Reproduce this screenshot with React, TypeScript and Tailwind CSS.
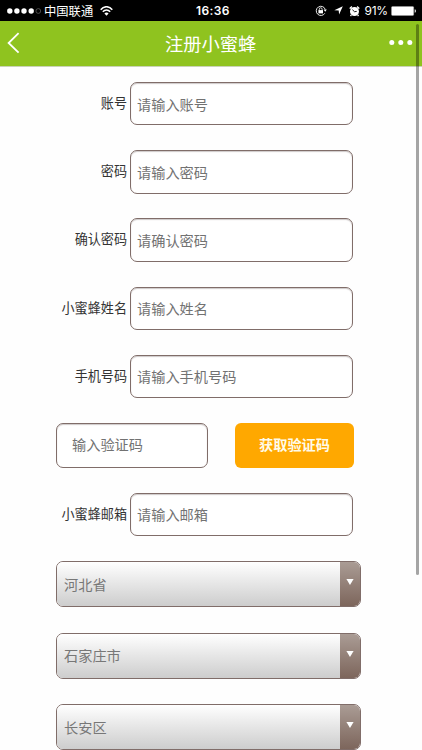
import React from 'react';

type FieldProps = { label: string; placeholder: string };

const inputStyle =
  'rounded-[7px] border border-[#806d69] bg-white text-[14.2px] text-[#727272] placeholder:text-[#727272] placeholder:opacity-100 shadow-[inset_0_1px_1px_rgba(80,60,60,0.28)] outline-none';

function Field({ label, placeholder }: FieldProps) {
  return (
    <div className="flex h-[43.4px] w-[353px] shrink-0 items-center">
      <label className="w-[127px] pb-[1.5px] text-right text-[13.1px] leading-5 text-[#333]">{label}</label>
      <input placeholder={placeholder} className={`ml-[3px] h-full w-[223px] px-[6px] ${inputStyle}`} />
    </div>
  );
}

function Picker({ value }: { value: string }) {
  return (
    <div className="ml-14 flex h-[46px] w-[305px] shrink-0 overflow-hidden rounded-[7px] border border-[#806d69]">
      <div className="flex flex-1 items-center bg-linear-to-b from-white to-[#cdcdcd] pl-[7px] pt-px text-[14.2px] text-[#777]">
        {value}
      </div>
      <div className="flex w-[20.5px] justify-center bg-linear-to-b from-[#aa9c95] to-[#7d665c] pt-[17px]">
        <svg width="8" height="6" viewBox="0 0 8 6">
          <path d="M.4 0h7.2L4 6z" fill="#fff" />
        </svg>
      </div>
    </div>
  );
}

function StatusBar() {
  return (
    <div className="flex h-[21px] shrink-0 items-center bg-black text-white">
      <div className="flex w-[196px] items-center pl-[7px]">
        <svg width="35" height="8" viewBox="0 0 35 8" fill="#fff">
          <circle cx="2.8" cy="4" r="2.7" />
          <circle cx="9.9" cy="4" r="2.7" />
          <circle cx="17" cy="4" r="2.7" />
          <circle cx="24.2" cy="4" r="2.7" />
          <circle cx="31.3" cy="4" r="2.4" fill="none" stroke="#777" strokeWidth=".6" />
        </svg>
        <span className="ml-[2px] text-[12.3px] leading-[20px]">中国联通</span>
        <svg className="ml-[7px]" width="13" height="10" viewBox="0 0 13 10" fill="none" stroke="#fff" strokeWidth="1.5">
          <path d="M.7 3.7C4-.3 9-.3 12.3 3.7M2.8 5.8c2.1-2.5 5.3-2.5 7.4 0" />
          <path d="M4.4 7.4c1.2-1.3 3-1.3 4.2 0L6.5 9.7z" fill="#fff" stroke="none" />
        </svg>
      </div>
      <span className="w-[119px] font-['Inter','Liberation_Sans',sans-serif] text-[12px] font-semibold leading-5 tracking-[0.4px]">16:36</span>
      <svg width="12" height="12" viewBox="0 0 12 12" fill="none" stroke="#fff">
        <path d="M9.8 8.3A4.6 4.6 0 1 1 10.2 4.3" strokeWidth=".9" />
        <path d="M8.6 4.5h3.2L10.2 6.7z" fill="#fff" stroke="none" />
        <path d="M4.3 5.4V4.2a1.4 1.4 0 0 1 2.8 0v1.2" strokeWidth=".8" />
        <path d="M3.4 5.1h4.6v3.3H3.4z" fill="#fff" stroke="none" />
      </svg>
      <svg className="ml-[6.5px]" width="9" height="9" viewBox="0 0 9 9" fill="#fff">
        <path d="M8.8.2 5.1 8.6 4.7 4.5.3 4.2z" />
      </svg>
      <svg className="ml-[6.5px]" width="11" height="12" viewBox="0 0 11 12">
        <circle cx="5.5" cy="6.5" r="4.5" fill="#fff" />
        <path d="M.8 3.6A6 6 0 0 1 3 1.6M10.2 3.6A6 6 0 0 0 8 1.6M2.3 10 1.5 11M8.7 10 9.5 11" stroke="#fff" strokeWidth="1.4" />
        <path d="m3.4 4.7 2.1 2 2.2-.3" fill="none" stroke="#000" strokeWidth=".9" />
      </svg>
      <span className="ml-[4.5px] w-[26.5px] whitespace-nowrap font-['Inter','Liberation_Sans',sans-serif] text-[12px] leading-5 tracking-[-0.3px]">91%</span>
      <svg width="26" height="10" viewBox="0 0 26 10">
        <rect x=".5" y=".5" width="22.2" height="9" rx="1" fill="#fff" stroke="#aaa" strokeWidth=".4" />
        <path d="M23.7 3.3q1.3 0 1.3 1.7t-1.3 1.7z" fill="#ddd" />
      </svg>
    </div>
  );
}

export default function App() {
  return (
    <div className="relative flex h-[750px] w-[422px] flex-col overflow-hidden bg-[#fefefe] font-['Noto_Sans_CJK_SC',sans-serif]">
      <StatusBar />
      <header className="flex h-[46px] shrink-0 items-center border-b border-[#c9d2b8] bg-[#8fc31f] pb-[2px] text-white">
        <svg className="ml-[7px]" width="13" height="22" viewBox="0 0 13 22" fill="none" stroke="#fff" strokeWidth="1.8">
          <path d="M11.6 1.2 1.6 11l10 9.7" />
        </svg>
        <h1 className="w-[369px] pl-[145px] text-[18.3px] leading-[26px]">注册小蜜蜂</h1>
        <svg width="24" height="6" viewBox="0 0 24 6" fill="#fff">
          <circle cx="2.8" cy="2.5" r="2.5" />
          <circle cx="11.8" cy="2.5" r="2.5" />
          <circle cx="20.8" cy="2.5" r="2.5" />
        </svg>
      </header>
      <main className="flex flex-col pt-[15px]">
        <div className="flex flex-col gap-[24.8px]">
          <Field label="账号" placeholder="请输入账号" />
          <Field label="密码" placeholder="请输入密码" />
          <Field label="确认密码" placeholder="请确认密码" />
          <Field label="小蜜蜂姓名" placeholder="请输入姓名" />
          <Field label="手机号码" placeholder="请输入手机号码" />
          <div className="ml-14 flex h-[45px] gap-[27px]">
            <input placeholder="输入验证码" className={`w-[152px] px-[15px] pb-px ${inputStyle}`} />
            <button className="w-[119px] rounded-[6px] bg-[#ffa800] pb-[2px] text-[14.2px] font-bold text-[#fffbe9]">获取验证码</button>
          </div>
          <Field label="小蜜蜂邮箱" placeholder="请输入邮箱" />
        </div>
        <div className="mt-[25px] flex flex-col gap-[25.4px]">
          <Picker value="河北省" />
          <Picker value="石家庄市" />
          <Picker value="长安区" />
        </div>
      </main>
      <div className="absolute left-[416px] top-6 h-[551px] w-[3px] rounded-full bg-black/35" />
    </div>
  );
}
